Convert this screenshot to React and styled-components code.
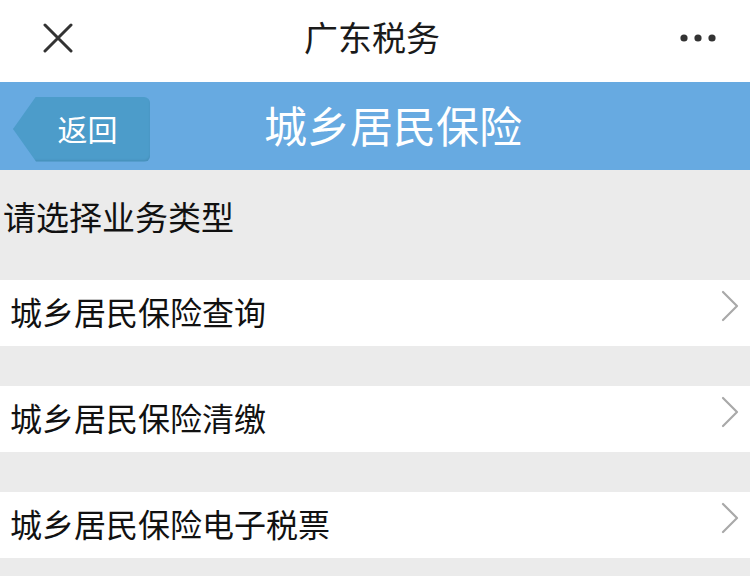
import React from "react";
import styled, { createGlobalStyle } from "styled-components";

const GlobalStyle = createGlobalStyle`
  html, body {
    margin: 0;
    padding: 0;
    background: #ebebeb;
  }
  body {
    font-family: "Noto Sans CJK SC", "Noto Sans", sans-serif;
  }
`;

const Page = styled.div`
  width: 750px;
  min-height: 576px;
  background: #ebebeb;
`;

const TopBar = styled.div`
  height: 82px;
  background: #ffffff;
  display: flex;
  align-items: center;
  justify-content: space-between;
  padding: 0 32px 7px 38px;
  box-sizing: border-box;
`;

const TopTitle = styled.div`
  font-size: 34px;
  line-height: 40px;
  color: #1a1a1a;
  font-weight: 400;
  margin: -2px 12px 0 0;
`;

const IconButton = styled.div`
  width: 40px;
  height: 40px;
  display: flex;
  align-items: center;
  justify-content: center;
`;

const NavBar = styled.div`
  height: 88px;
  background: #67aae1;
  display: flex;
  align-items: center;
  padding-left: 13px;
`;

const BackButton = styled.div`
  width: 137px;
  height: 65px;
  margin-top: 6px;
  background: #4c9cca;
  clip-path: polygon(23px 0, 100% 0, 100% 100%, 23px 100%, 0 50%);
  border-radius: 0 6px 6px 0;
  display: flex;
  align-items: center;
  justify-content: center;
  padding: 0 0 3px 12px;
  box-sizing: border-box;
  color: #ffffff;
  font-size: 30px;
  line-height: 1;
  box-shadow: inset 0 -2px 2px rgba(0, 0, 0, 0.08);
`;

const NavTitle = styled.div`
  flex: 1;
  text-align: center;
  color: #ffffff;
  font-size: 43px;
  line-height: 50px;
  margin: -4px 114px 0 0;
`;

const SectionLabel = styled.div`
  height: 110px;
  padding: 22px 0 0 3px;
  box-sizing: border-box;
  font-size: 33px;
  color: #111111;
`;

const List = styled.div`
  display: flex;
  flex-direction: column;
  gap: 40px;
`;

const Row = styled.div`
  height: 66px;
  background: #ffffff;
  display: flex;
  align-items: center;
  justify-content: space-between;
  padding: 0 11px 0 10px;
  box-sizing: border-box;
`;

const RowText = styled.div`
  font-size: 32px;
  line-height: 40px;
  margin-top: -4px;
  color: #111111;
`;

const ChevronIcon = styled.svg`
  margin-top: -14px;
`;

const Chevron = () => (
  <ChevronIcon width="18" height="32" viewBox="0 0 18 32">
    <path d="M2 2 L16 16 L2 30" fill="none" stroke="#a9a9a9" strokeWidth="2.2" strokeLinecap="round" strokeLinejoin="round" />
  </ChevronIcon>
);

const items = ["城乡居民保险查询", "城乡居民保险清缴", "城乡居民保险电子税票"];

export default function App() {
  return (
    <Page>
      <GlobalStyle />
      <TopBar>
        <IconButton>
          <svg width="30" height="30" viewBox="0 0 30 30">
            <path d="M2 2 L28 28 M28 2 L2 28" stroke="#333" strokeWidth="3" strokeLinecap="round" />
          </svg>
        </IconButton>
        <TopTitle>广东税务</TopTitle>
        <IconButton>
          <svg width="38" height="10" viewBox="0 0 38 10">
            <circle cx="5" cy="5" r="3.6" fill="#333" />
            <circle cx="19" cy="5" r="3.6" fill="#333" />
            <circle cx="33" cy="5" r="3.6" fill="#333" />
          </svg>
        </IconButton>
      </TopBar>
      <NavBar>
        <BackButton>返回</BackButton>
        <NavTitle>城乡居民保险</NavTitle>
      </NavBar>
      <SectionLabel>请选择业务类型</SectionLabel>
      <List>
        {items.map((t) => (
          <Row key={t}>
            <RowText>{t}</RowText>
            <Chevron />
          </Row>
        ))}
      </List>
    </Page>
  );
}
